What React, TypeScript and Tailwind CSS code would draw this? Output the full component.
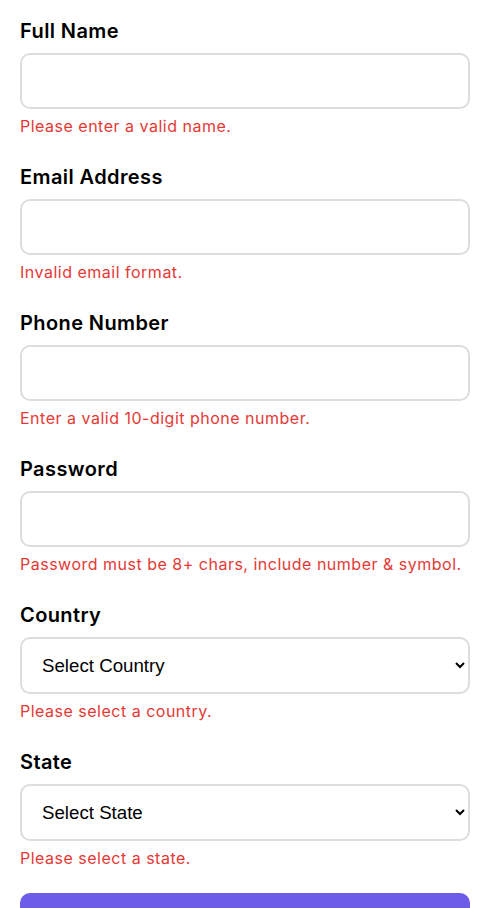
import React from "react";

const fields = [
  { label: "Full Name", type: "text", error: "Please enter a valid name." },
  { label: "Email Address", type: "email", error: "Invalid email format." },
  { label: "Phone Number", type: "tel", error: "Enter a valid 10-digit phone number." },
  { label: "Password", type: "password", error: "Password must be 8+ chars, include number & symbol." },
];

const selects = [
  { label: "Country", placeholder: "Select Country", error: "Please select a country." },
  { label: "State", placeholder: "Select State", error: "Please select a state." },
];

const App: React.FC = () => {
  return (
    <div className="bg-white min-h-screen pl-5 pr-[22px] pt-[17px] font-['Inter',sans-serif]">
      <form className="flex flex-col" onSubmit={(e) => e.preventDefault()}>
        {fields.map((f) => (
          <div key={f.label} className="mb-[26px]">
            <label className="block text-[20px] leading-[28px] tracking-[0.4px] font-semibold text-black mb-2">
              {f.label}
            </label>
            <input
              type={f.type}
              className="block w-full h-[56px] rounded-[10px] border-2 border-[#dddddd] px-5 outline-none"
            />
            <p className="mt-[6px] text-[16px] leading-[22px] tracking-[0.5px] text-[#e53935]">{f.error}</p>
          </div>
        ))}
        {selects.map((s) => (
          <div key={s.label} className="mb-[26px]">
            <label className="block text-[20px] leading-[28px] tracking-[0.4px] font-semibold text-black mb-2">
              {s.label}
            </label>
            <select
              defaultValue=""
              className="block w-full h-[57px] rounded-[10px] border-2 border-[#dddddd] pl-4 pr-[12px] text-[18.7px] font-['Liberation_Sans',Arial,sans-serif] text-black bg-white outline-none"
            >
              <option value="">{s.placeholder}</option>
            </select>
            <p className="mt-[6px] text-[16px] leading-[22px] tracking-[0.5px] text-[#e53935]">{s.error}</p>
          </div>
        ))}
        <button
          type="submit"
          className="-mt-0.5 w-full h-[56px] rounded-[10px] bg-[#6c5ce7] text-white text-[18px] font-semibold"
        >
          Register
        </button>
      </form>
    </div>
  );
};

export default App;
